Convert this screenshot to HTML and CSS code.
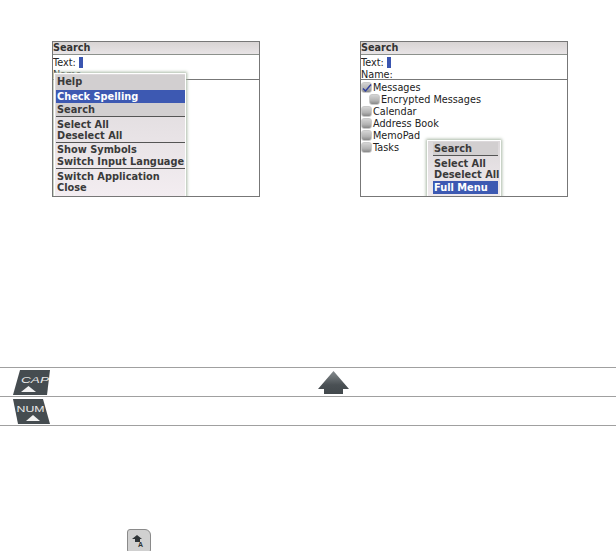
FILE: index.html
```html
<!DOCTYPE html>
<html lang="en">
<head>
    <meta charset="UTF-8">
    <title>Search options</title>
    <link rel="stylesheet" href="styles.css">
</head>
<body>
    <!-- Device screenshots -->
    <div class="shots">
        <div class="screen">
            <div class="title-bar">Search</div>
            <div class="fields">
                <div class="field">Text: <span class="cursor"></span></div>
                <div class="field">Name:</div>
            </div>
            <div class="menu menu-full">
                <div class="menu-group menu-group-dark no-line">
                    <div class="menu-item">Help</div>
                </div>
                <div class="menu-item selected">Check Spelling</div>
                <div class="menu-group menu-group-dark">
                    <div class="menu-item">Search</div>
                </div>
                <div class="menu-group">
                    <div class="menu-item">Select All</div>
                    <div class="menu-item">Deselect All</div>
                </div>
                <div class="menu-group roomy">
                    <div class="menu-item">Show Symbols</div>
                    <div class="menu-item">Switch Input Language</div>
                </div>
                <div class="menu-group last">
                    <div class="menu-item">Switch Application</div>
                    <div class="menu-item">Close</div>
                </div>
            </div>
        </div>

        <div class="screen">
            <div class="title-bar">Search</div>
            <div class="fields">
                <div class="field">Text: <span class="cursor"></span></div>
                <div class="field">Name:</div>
            </div>
            <ul class="checks">
                <li><span class="box"><svg viewBox="0 0 11 11" width="11" height="11"><path d="M2 6.5 L4.5 9 L10 2.5" fill="none" stroke="#2f3f9e" stroke-width="1.4"/></svg></span>Messages</li>
                <li class="nested"><span class="box"></span>Encrypted Messages</li>
                <li><span class="box"></span>Calendar</li>
                <li><span class="box"></span>Address Book</li>
                <li><span class="box"></span>MemoPad</li>
                <li><span class="box"></span>Tasks</li>
            </ul>
            <div class="menu menu-short">
                <div class="menu-group menu-group-dark">
                    <div class="menu-item">Search</div>
                </div>
                <div class="menu-group last">
                    <div class="menu-item">Select All</div>
                    <div class="menu-item">Deselect All</div>
                </div>
                <div class="menu-item selected">Full Menu</div>
            </div>
        </div>
    </div>

    <!-- Key table -->
    <div class="keys">
        <div class="key-row">
            <svg class="key-icon" viewBox="0 0 37 25" width="37" height="25">
                <path d="M7 0 H37 L34 25 H0 Z" fill="#454c50"/>
                <text x="22" y="12.5" class="key-label key-label-cap" textLength="28" lengthAdjust="spacingAndGlyphs">CAP</text>
                <path d="M15.5 16 L23 22 H8 Z" fill="#f2f2f2"/>
            </svg>
            <svg class="arrow-icon" viewBox="0 0 32 23" width="32" height="23">
                <defs>
                    <linearGradient id="arrowFill" x1="0" y1="0" x2="0" y2="1">
                        <stop offset="0" stop-color="#868c8f"/>
                        <stop offset="0.6" stop-color="#4a5054"/>
                        <stop offset="1" stop-color="#42484c"/>
                    </linearGradient>
                </defs>
                <path d="M15.5 0 L31 18 H25 V23 H6 V18 H0 Z" fill="url(#arrowFill)"/>
            </svg>
        </div>
        <div class="key-row">
            <svg class="key-icon" viewBox="0 0 37 25" width="37" height="25">
                <path d="M0 0 H30 L37 25 H5 Z" fill="#454c50"/>
                <text x="17.5" y="12.5" class="key-label" textLength="28" lengthAdjust="spacingAndGlyphs">NUM</text>
                <path d="M20 16 L27 22 H13 Z" fill="#f2f2f2"/>
            </svg>
        </div>
    </div>

    <!-- Shift key at the page fold -->
    <div class="shift-line">
        <div class="shift-key">
            <svg viewBox="0 0 14 12" width="14" height="12">
                <path d="M5 0 L10 4 H8 V7 H3 V4 H0 Z" fill="#2e3336"/>
                <text x="6" y="12" class="shift-label">A</text>
            </svg>
        </div>
    </div>
</body>
</html>
```

FILE: styles.css
```css
/* General Styles */
html,
body {
    height: 551px;
    overflow: hidden;
}

body {
    margin: 0;
    background: #fff;
    color: #222;
    font-family: "DejaVu Sans", sans-serif;
}

/* Device Screens */
.shots {
    display: flex;
    gap: 100px;
    padding: 41px 0 0 52px;
}

.screen {
    position: relative;
    width: 208px;
    height: 156px;
    box-sizing: border-box;
    border: 1px solid #777;
    overflow: hidden;
    font-size: 9.7px;
}

.title-bar {
    height: 12px;
    background: linear-gradient(to bottom, #d8d4d4, #e8e4e6);
    border-bottom: 1px solid #8c918c;
    font-weight: 700;
    line-height: 11px;
    color: #333;
}

.fields {
    box-sizing: border-box;
    height: 25px;
    padding-top: 1px;
    border-bottom: 1px solid #777;
}

.field {
    display: flex;
    align-items: center;
    gap: 3px;
    height: 12px;
}

.cursor {
    width: 4px;
    height: 11px;
    background: #3a55b0;
}

/* Checkbox List */
.checks {
    list-style: none;
    margin: 0;
    padding: 1px 0 0;
}

.checks li {
    display: flex;
    align-items: center;
    gap: 1px;
    height: 12px;
}

.checks .nested {
    padding-left: 8px;
}

.box {
    display: block;
    width: 11px;
    height: 11px;
    box-sizing: border-box;
    border-radius: 3px;
    background: linear-gradient(to bottom, #d4d4d4, #b4b4b4 60%, #888);
    border: 1px solid #cacaca;
}

.box svg {
    display: block;
    margin: -1px;
}

/* Popup Menus */
.menu {
    position: absolute;
    box-sizing: border-box;
    background: linear-gradient(to bottom, #dcd8da, #f4eef2);
    border: 1px solid #fff;
    box-shadow: 0 0 3px 1px #a9b8a6;
    font-size: 9.8px;
    font-weight: 700;
    color: #3a3a3a;
}

.menu-full {
    left: 1px;
    top: 31px;
    width: 132px;
    height: 130px;
    padding: 1px 0 0 1px;
}

.menu-short {
    left: 66px;
    top: 98px;
    width: 74px;
    height: 70px;
    padding: 1px 2px 0 5px;
}

.menu-group {
    padding-top: 1.5px;
    border-bottom: 1px solid #555;
}

.menu-group .menu-item {
    height: 11.5px;
    line-height: 11.5px;
}

.menu-group.roomy {
    padding-bottom: 1px;
}

.menu-group.last {
    padding-bottom: 0.5px;
    border-bottom: none;
}

.menu-group-dark {
    padding-top: 1px;
    background: #d2cfd0;
}

.menu-group-dark .menu-item {
    height: 12px;
    line-height: 12px;
}

.menu-group.no-line {
    padding-bottom: 2px;
    border-bottom: none;
}

.menu-item {
    padding-left: 1px;
    white-space: nowrap;
}

.menu-item.selected {
    height: 13px;
    background: #3d59b2;
    color: #fff;
    line-height: 13px;
}

/* Key Table */
.keys {
    margin-top: 170px;
    border-top: 1px solid #a0a0a0;
}

.key-row {
    display: flex;
    align-items: center;
    height: 28px;
    padding-left: 13px;
    border-bottom: 1px solid #a0a0a0;
}

.key-icon {
    display: block;
}

.arrow-icon {
    display: block;
    margin-left: 268px;
}

.key-label {
    fill: #e8e8e8;
    font-family: "Liberation Sans", sans-serif;
    font-size: 9px;
    text-anchor: middle;
}

.key-label-cap {
    font-style: italic;
}

/* Shift Key */
.shift-line {
    padding: 103px 0 0 127px;
}

.shift-key {
    display: flex;
    justify-content: center;
    padding-top: 5px;
    box-sizing: border-box;
    width: 24px;
    height: 24px;
    background: #d0d0d0;
    border: 1px solid #8a8a8a;
    border-radius: 3px 6px 3px 3px;
}

.shift-key svg {
    display: block;
}

.shift-label {
    fill: #2e3336;
    font-family: "Liberation Sans", sans-serif;
    font-size: 7px;
    font-weight: 700;
}
```
